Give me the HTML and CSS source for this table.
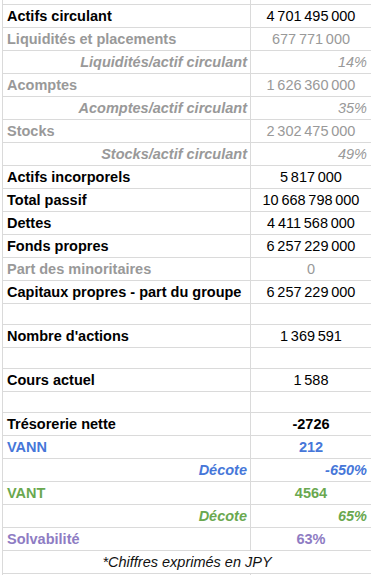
FILE: index.html
```html
<!DOCTYPE html>
<html lang="fr">
<head>
<meta charset="utf-8">
<title>Bilan</title>
<link rel="stylesheet" href="styles.css">
</head>
<body>
<div class="sheet">
  <div class="row edge-top"><div class="c1"></div><div class="c2"></div></div>

  <div class="row"><div class="c1 b">Actifs circulant</div><div class="c2 num">4 701 495 000</div></div>
  <div class="row gray"><div class="c1 b">Liquidités et placements</div><div class="c2 num">677 771 000</div></div>
  <div class="row gray"><div class="c1 b i right">Liquidités/actif circulant</div><div class="c2 i right">14%</div></div>
  <div class="row gray"><div class="c1 b">Acomptes</div><div class="c2 num">1 626 360 000</div></div>
  <div class="row gray"><div class="c1 b i right">Acomptes/actif circulant</div><div class="c2 i right">35%</div></div>
  <div class="row gray"><div class="c1 b">Stocks</div><div class="c2 num">2 302 475 000</div></div>
  <div class="row gray"><div class="c1 b i right">Stocks/actif circulant</div><div class="c2 i right">49%</div></div>
  <div class="row"><div class="c1 b">Actifs incorporels</div><div class="c2 num">5 817 000</div></div>
  <div class="row"><div class="c1 b">Total passif</div><div class="c2 num">10 668 798 000</div></div>
  <div class="row"><div class="c1 b">Dettes</div><div class="c2 num">4 411 568 000</div></div>
  <div class="row"><div class="c1 b">Fonds propres</div><div class="c2 num">6 257 229 000</div></div>
  <div class="row gray"><div class="c1 b">Part des minoritaires</div><div class="c2 num">0</div></div>
  <div class="row"><div class="c1 b">Capitaux propres - part du groupe</div><div class="c2 num">6 257 229 000</div></div>

  <div class="row empty"><div class="c1"></div><div class="c2"></div></div>
  <div class="row"><div class="c1 b">Nombre d'actions</div><div class="c2 num">1 369 591</div></div>
  <div class="row empty"><div class="c1"></div><div class="c2"></div></div>
  <div class="row"><div class="c1 b">Cours actuel</div><div class="c2 num">1 588</div></div>
  <div class="row empty"><div class="c1"></div><div class="c2"></div></div>
  <div class="row"><div class="c1 b">Trésorerie nette</div><div class="c2 num b">-2726</div></div>

  <div class="row blue"><div class="c1 b">VANN</div><div class="c2 num b">212</div></div>
  <div class="row blue"><div class="c1 b i right">Décote</div><div class="c2 b i right">-650%</div></div>
  <div class="row green"><div class="c1 b">VANT</div><div class="c2 num b">4564</div></div>
  <div class="row green"><div class="c1 b i right">Décote</div><div class="c2 b i right">65%</div></div>
  <div class="row purple"><div class="c1 b">Solvabilité</div><div class="c2 num b">63%</div></div>
  <div class="row merged"><div class="cm i">*Chiffres exprimés en JPY</div></div>

  <div class="row edge-bottom"><div class="c1"></div><div class="c2"></div></div>
</div>
</body>
</html>
```

FILE: styles.css
```css
html, body {
  margin: 0;
  padding: 0;
  background: #ffffff;
}

body {
  width: 371px;
  height: 575px;
  overflow: hidden;
  font-family: "Liberation Sans", Arial, sans-serif;
  font-size: 14.5px;
  color: #000000;
}

.sheet {
  margin-left: 2px;
  border-left: 1px solid #dadada;
}

.row {
  display: grid;
  grid-template-columns: 248px 1fr;
  height: 23px;
  box-sizing: border-box;
  border-bottom: 1px solid #dadada;
}

.row.edge-top {
  height: 5px;
}

.row.edge-bottom {
  height: 2px;
  border-bottom: none;
}

.row.empty {
  height: 21px;
}

.row.merged {
  grid-template-columns: 1fr;
}

.c1,
.c2,
.cm {
  display: flex;
  align-items: center;
  white-space: nowrap;
  overflow: hidden;
}

.c1 {
  border-right: 1px solid #dadada;
  padding-left: 4px;
  padding-right: 3px;
}

.c2 {
  padding-right: 4px;
  justify-content: flex-start;
}

.cm {
  justify-content: center;
  color: #111111;
}

.num {
  justify-content: center;
  padding-right: 0;
  padding-left: 0;
  word-spacing: -1.3px;
}

.right {
  justify-content: flex-end;
}

.b {
  font-weight: bold;
}

.i {
  font-style: italic;
}

.gray {
  color: #999999;
}

.blue {
  color: #4677d9;
}

.green {
  color: #6aa84f;
}

.purple {
  color: #8e7cc3;
}
```
